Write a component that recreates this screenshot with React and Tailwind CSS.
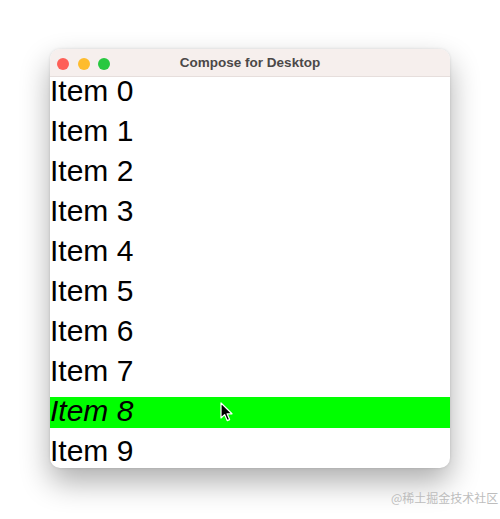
import React from "react";

const items = [0, 1, 2, 3, 4, 5, 6, 7, 8, 9];

function Cursor() {
  return (
    <svg
      className="absolute left-[170px] top-[5px]"
      width="14"
      height="20"
      viewBox="0 0 14 20"
    >
      <path
        d="M1 1 L1 16 L4.6 12.6 L7.2 18.6 L9.6 17.6 L7.1 11.8 L12 11.8 Z"
        fill="#000"
        stroke="#fff"
        strokeWidth="1.2"
        strokeLinejoin="round"
      />
    </svg>
  );
}

export default function App() {
  return (
    <div className="relative w-[500px] h-[519px] bg-white overflow-hidden">
      <div className="pt-[49px] pl-[50px]">
        <div className="w-[400px] h-[419px] rounded-[10px] bg-white overflow-hidden shadow-[0_14px_30px_rgba(0,0,0,0.32),0_0_3px_rgba(0,0,0,0.12)] flex flex-col">
          <div className="relative h-[28px] shrink-0 bg-[#f6efed] border-b border-[#e6dedc] flex items-center justify-center">
            <div className="absolute left-[7px] top-[9px] flex gap-[8.5px]">
              <span className="block w-[12px] h-[12px] rounded-full bg-[#fe5f57]" />
              <span className="block w-[12px] h-[12px] rounded-full bg-[#febc2e]" />
              <span className="block w-[12px] h-[12px] rounded-full bg-[#28c840]" />
            </div>
            <span className="text-[13.5px] font-bold text-[#4b4848] font-['Liberation_Sans',Arial,sans-serif] leading-none">
              Compose for Desktop
            </span>
          </div>
          <div className="flex flex-col gap-[9px] font-['Liberation_Sans',Arial,sans-serif] text-black">
            {items.map((i) =>
              i === 8 ? (
                <div key={i} className="relative h-[31px] bg-[#00ff00]">
                  <span className="block text-[30px] leading-[27px] italic">
                    Item {i}
                  </span>
                  <Cursor />
                </div>
              ) : (
                <div key={i} className="h-[31px]">
                  <span className="block text-[30px] leading-[27px]">
                    Item {i}
                  </span>
                </div>
              )
            )}
          </div>
        </div>
      </div>
      <div className="absolute left-[391px] top-[490px] text-[12px] leading-[16px] text-[#bdbdbd] font-['Noto_Sans_CJK_SC',sans-serif]">
        @稀土掘金技术社区
      </div>
    </div>
  );
}
